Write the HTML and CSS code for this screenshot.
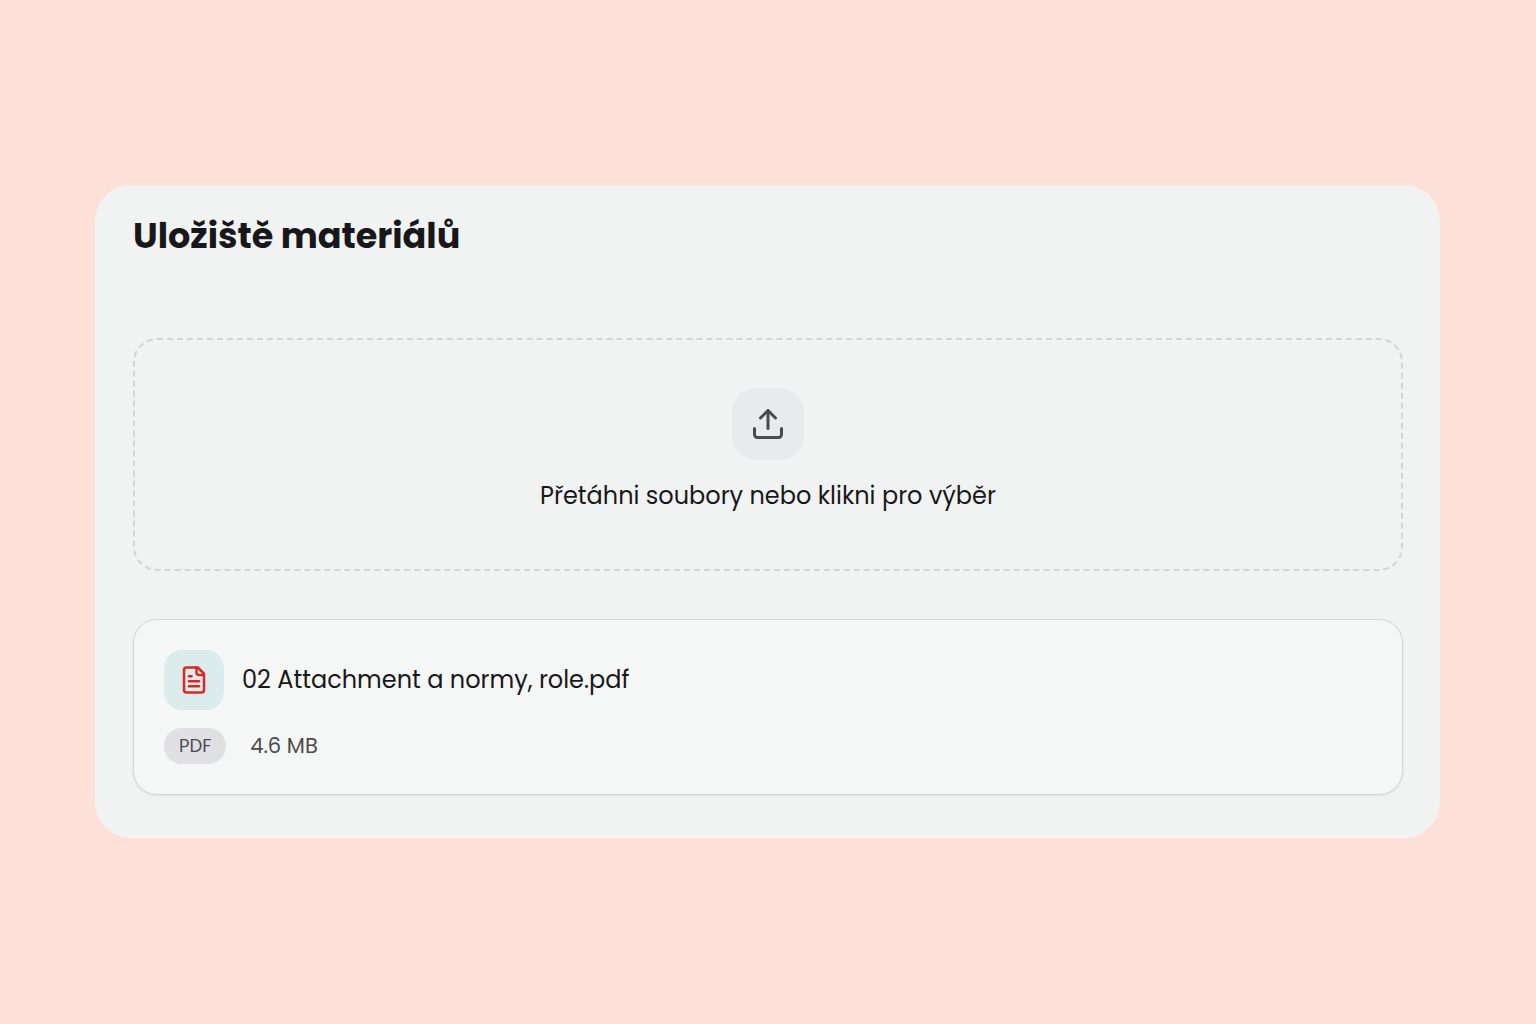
FILE: index.html
```html
<!DOCTYPE html>
<html lang="cs">
<head>
    <meta charset="UTF-8">
    <meta name="viewport" content="width=device-width, initial-scale=1.0">
    <title>Uložiště materiálů</title>
    <link rel="stylesheet" href="styles.css">
</head>
<body>
    <main class="storage">
        <h1>Uložiště materiálů</h1>

        <input type="file" id="fileInput" class="file-input" multiple>
        <label for="fileInput" class="dropzone">
            <span class="upload-icon">
                <svg width="36" height="36" viewBox="0 0 24 24" fill="none" stroke="currentColor" stroke-width="2" stroke-linecap="round" stroke-linejoin="round" aria-hidden="true">
                    <path d="M12 3v12"/>
                    <path d="m17 8-5-5-5 5"/>
                    <path d="M21 15v4a2 2 0 0 1-2 2H5a2 2 0 0 1-2-2v-4"/>
                </svg>
            </span>
            <span>Přetáhni soubory nebo klikni pro výběr</span>
        </label>

        <ul class="file-list">
            <li class="file-item">
                <div class="file-name">
                    <span class="file-icon">
                        <svg width="30" height="30" viewBox="0 0 24 24" fill="none" stroke="currentColor" stroke-width="2" stroke-linecap="round" stroke-linejoin="round" aria-hidden="true">
                            <path d="M15 2H6a2 2 0 0 0-2 2v16a2 2 0 0 0 2 2h12a2 2 0 0 0 2-2V7Z"/>
                            <path d="M14 2v4a2 2 0 0 0 2 2h4"/>
                            <path d="M10 9H8"/>
                            <path d="M16 13H8"/>
                            <path d="M16 17H8"/>
                        </svg>
                    </span>
                    <span>02 Attachment a normy, role.pdf</span>
                </div>
                <div class="file-meta">
                    <span class="badge">PDF</span>
                    <span>4.6 MB</span>
                </div>
            </li>
        </ul>
    </main>
</body>
</html>
```

FILE: styles.css
```css
* {
    box-sizing: border-box;
}
body {
    margin: 0;
    padding: 48px 96px 50px 95px;
    min-height: 100vh;
    display: flex;
    align-items: center;
    background-color: #fde0d8;
    color: #18181b;
    font-family: Poppins, Inter, sans-serif;
    font-size: 24px;
    line-height: 36px;
}
.storage {
    flex-grow: 1;
    padding: 24px 37px 43px 38px;
    border-radius: 36px;
    background-color: #f1f3f2;
}
h1 {
    margin: 0 0 75px;
    font-size: 35px;
    font-weight: 700;
    line-height: 54px;
}
.file-input {
    position: absolute;
    width: 1px;
    height: 1px;
    opacity: 0;
}
.dropzone {
    display: flex;
    flex-direction: column;
    align-items: center;
    gap: 18px;
    padding: 48px 24px 55px;
    border: 2px dashed #d4d4d8;
    border-radius: 24px;
    cursor: pointer;
}
.dropzone:hover,
.file-input:focus-visible + .dropzone {
    border-color: #a1a1aa;
}
.upload-icon {
    display: flex;
    align-items: center;
    justify-content: center;
    width: 72px;
    height: 72px;
    border-radius: 24px;
    background-color: #e9eaeb;
    color: #4b4b4e;
}
.file-list {
    margin: 48px 0 0;
    padding: 0;
    list-style: none;
}
.file-item {
    padding: 30px;
    border: 1px solid #d4d4d8;
    border-radius: 24px;
    background-color: #f5f7f6;
    box-shadow: 0 1px 3px rgba(0, 0, 0, 0.06);
}
.file-name {
    display: flex;
    align-items: center;
    gap: 18px;
}
.file-icon {
    display: flex;
    align-items: center;
    justify-content: center;
    width: 60px;
    height: 60px;
    border-radius: 18px;
    background-color: #dcecec;
    color: #dc2626;
}
.file-meta {
    display: flex;
    align-items: center;
    gap: 24px;
    margin-top: 18px;
    color: #4b4b4e;
    font-size: 21px;
}
.badge {
    padding: 0 15px;
    border-radius: 18px;
    background-color: #e0e0e3;
    font-size: 18px;
}
```
